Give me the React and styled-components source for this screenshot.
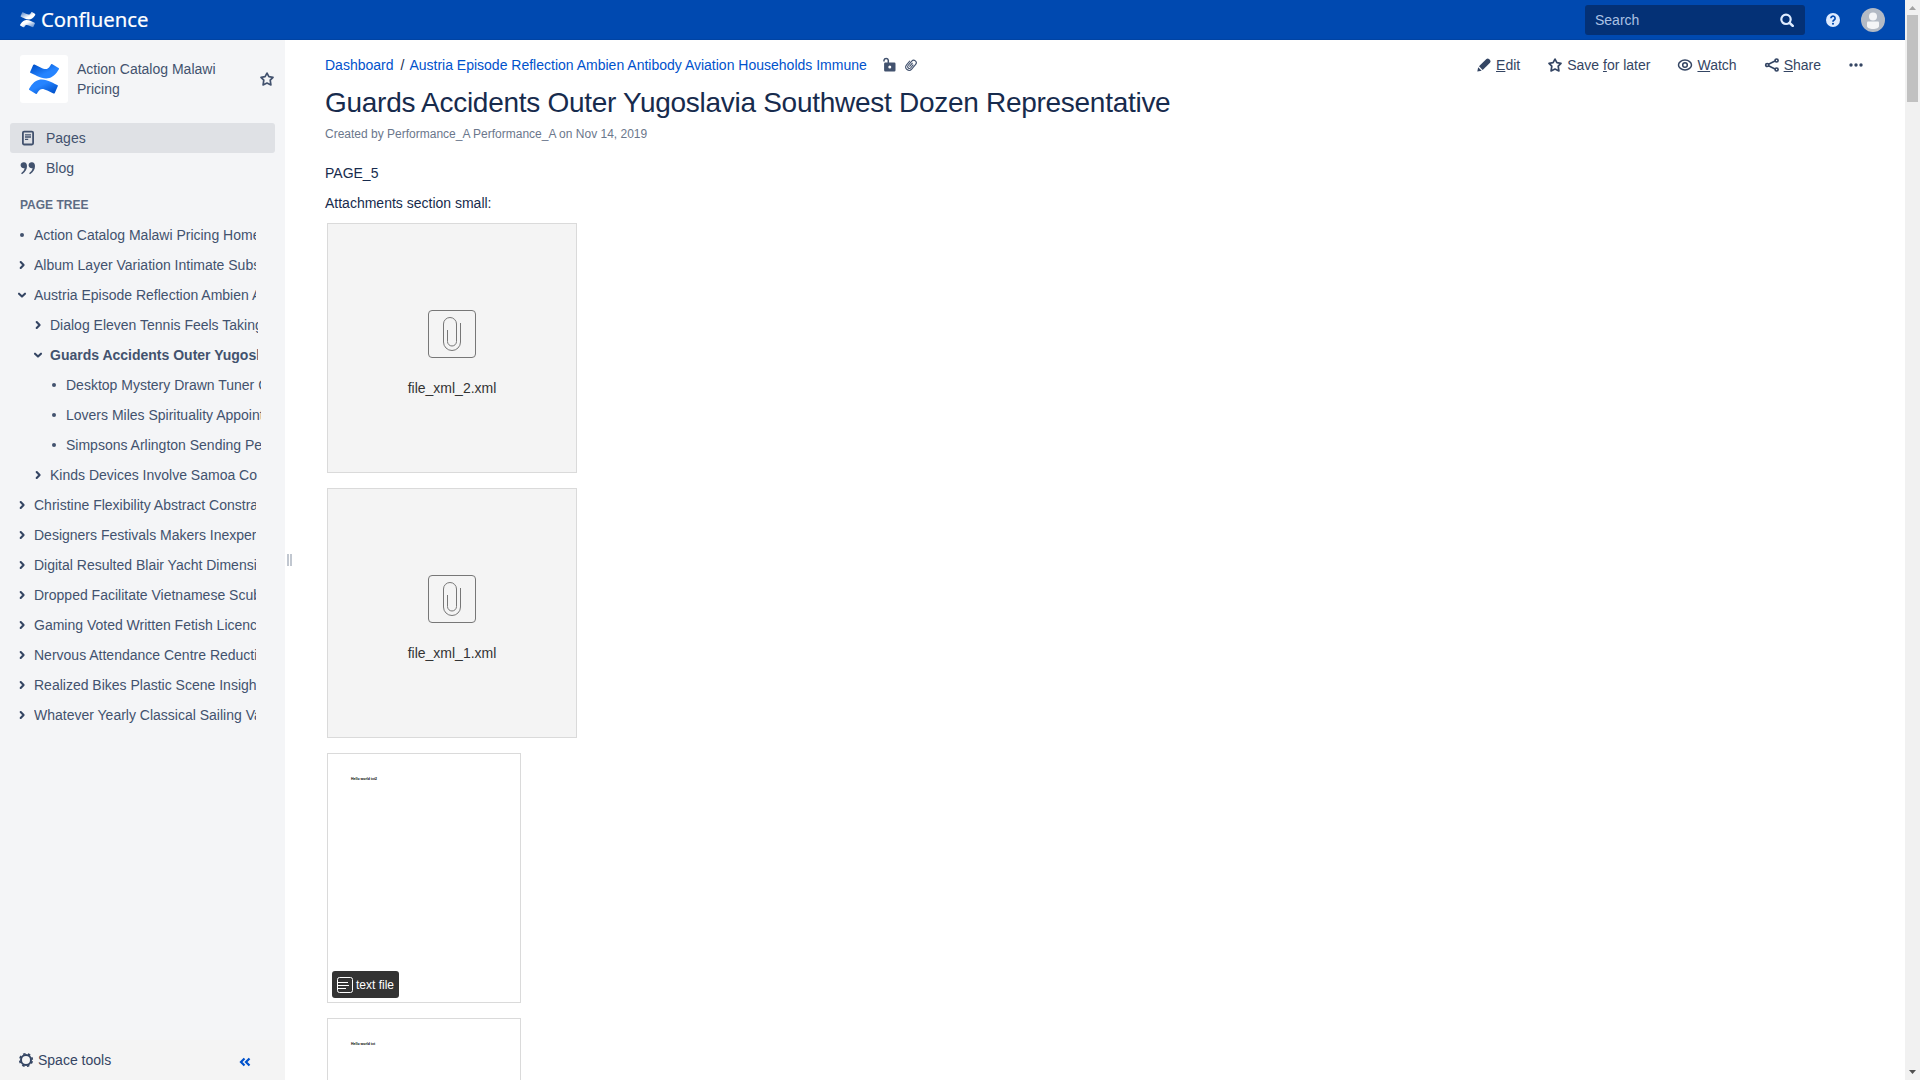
import React from "react";
import styled, { createGlobalStyle } from "styled-components";

const Global = createGlobalStyle`
  * { box-sizing: border-box; }
  html, body { margin: 0; padding: 0; height: 1080px; overflow: hidden; background: #fff; }
  body { font: 14px/20px "Liberation Sans", Arial, sans-serif; color: #172b4d; }
  p, h1 { margin: 0; font-weight: 400; }
  svg { display: block; flex: none; }
`;

const Window = styled.div`
  display: flex;
  width: 1920px;
  height: 1080px;
  overflow: hidden;
`;
const Page = styled.div`
  width: 1905px;
  display: flex;
  flex-direction: column;
`;
const Header = styled.header`
  height: 40px;
  flex: none;
  background: #0049b0;
  border-bottom: 1px solid #0043a3;
  display: flex;
  align-items: center;
  justify-content: space-between;
  padding: 0 20px;
`;
const HeaderTools = styled.div`
  display: flex;
  align-items: center;
`;
const SearchBox = styled.div`
  width: 220px;
  height: 30px;
  border-radius: 3px;
  background: #043176;
  color: #abc2e4;
  display: flex;
  align-items: center;
  justify-content: space-between;
  padding: 0 11px 0 10px;
  margin-right: 20px;
`;
const Avatar = styled.div`
  margin-left: 20px;
`;
const Body = styled.div`
  display: flex;
  flex: 1;
  min-height: 0;
`;
const Sidebar = styled.aside`
  width: 285px;
  background: #f4f5f7;
  color: #42526e;
  display: flex;
  flex-direction: column;
`;
const Space = styled.div`
  display: flex;
  align-items: center;
  height: 48px;
  margin: 15px 10px 0 20px;
`;
const SpaceLogo = styled.div`
  width: 48px;
  height: 48px;
  border-radius: 3px;
  background: #fff;
  display: flex;
  align-items: center;
  justify-content: center;
`;
const SpaceName = styled.div`
  width: 160px;
  margin: 0 auto 0 9px;
`;
const Nav = styled.nav`
  margin: 20px 10px 0;
`;
const NavItem = styled.div`
  height: 30px;
  display: flex;
  align-items: center;
  gap: 10px;
  padding-left: 10px;
  border-radius: 3px;
  background: ${(p) => (p.$active ? "#dfe1e5" : "transparent")};
`;
const TreeTitle = styled.div`
  font-size: 12px;
  font-weight: 700;
  color: #5e6c84;
  margin: 12px 0 5px 20px;
  height: 20px;
`;
const TreeRow = styled.div`
  height: 30px;
  display: flex;
  align-items: center;
  padding-left: ${(p) => 14 + p.$level * 16}px;
  font-weight: ${(p) => (p.$current ? 700 : 400)};
`;
const TreeText = styled.span`
  margin-left: 4px;
  width: ${(p) => [222, 208, 195][p.$level]}px;
  overflow: hidden;
  white-space: nowrap;
`;
const SideFooter = styled.div`
  margin-top: auto;
  height: 40px;
  background: #f4f4f4;
  display: flex;
  align-items: center;
  padding: 0 34px 0 18px;
  color: #344563;
`;
const FooterLabel = styled.span`
  margin: 0 auto 0 4px;
`;
const Splitter = styled.div`
  width: 10px;
  display: flex;
  gap: 1px;
  padding: 514px 0 0 2px;
`;
const Grip = styled.i`
  width: 2px;
  height: 12px;
  background: #c1c7d0;
`;
const Main = styled.main`
  flex: 1;
  min-width: 0;
  padding: 15px 41px 0 30px;
`;
const TopRow = styled.div`
  display: flex;
  height: 20px;
  align-items: center;
  justify-content: space-between;
`;
const Crumbs = styled.div`
  display: flex;
  align-items: center;
  white-space: nowrap;
`;
const Link = styled.a`
  color: #0052cc;
`;
const Slash = styled.span`
  margin: 0 5px 0 7px;
`;
const CrumbIcons = styled.span`
  display: flex;
  gap: 6px;
  margin-left: 14px;
`;
const Actions = styled.div`
  display: flex;
  align-items: center;
  color: #344563;
`;
const Action = styled.div`
  display: flex;
  align-items: center;
  gap: 4px;
  margin-left: 27px;
  white-space: nowrap;
`;
const Title = styled.h1`
  font-size: 28px;
  line-height: 32px;
  letter-spacing: -0.28px;
  margin-top: 12px;
`;
const Meta = styled.p`
  font-size: 12px;
  color: #6b778c;
  margin-top: 5px;
`;
const Content = styled.div`
  display: flex;
  flex-direction: column;
  gap: 10px;
  margin-top: 19px;
`;
const Files = styled.div`
  display: flex;
  flex-direction: column;
  align-items: flex-start;
  gap: 15px;
  padding-left: 2px;
`;
const FileCard = styled.div`
  width: 250px;
  height: 250px;
  flex: none;
  border: 1px solid #dadada;
  background: #f4f4f4;
  color: #333;
  display: flex;
  flex-direction: column;
  align-items: center;
  padding-top: 86px;
  gap: 20px;
`;
const DocCard = styled.div`
  width: 194px;
  height: 250px;
  flex: none;
  border: 1px solid #dadada;
  background: #fff;
  display: flex;
  flex-direction: column;
  justify-content: space-between;
  align-items: flex-start;
  padding: 22px 4px 4px;
`;
const DocText = styled.span`
  margin-left: 19px;
  height: 6px;
  font: 700 3.5px/6px "Liberation Sans", Arial, sans-serif;
  color: #000;
  white-space: nowrap;
`;
const Badge = styled.div`
  height: 27px;
  width: 67px;
  border-radius: 3px;
  background: #333;
  color: #fff;
  font-size: 12px;
  display: flex;
  align-items: center;
  gap: 3px;
  padding-left: 5px;
  white-space: nowrap;
`;
const Scrollbar = styled.div`
  width: 15px;
  background: #f1f1f1;
  display: flex;
  flex-direction: column;
  align-items: center;
`;
const Thumb = styled.div`
  width: 11px;
  height: 87px;
  margin-bottom: auto;
  background: #c1c1c1;
`;

function Mark({ size, light }) {
  const id = light ? "l" : "b";
  return (
    <svg width={size} height={size} viewBox="0 0 30 30">
      <defs>
        <linearGradient id={id + "1"} x1="1" y1="1" x2="0" y2="0">
          <stop offset="0.1" stopColor={light ? "#fff" : "#0052cc"} stopOpacity={light ? 0.4 : 1} />
          <stop offset="0.6" stopColor={light ? "#fff" : "#2684ff"} />
        </linearGradient>
        <linearGradient id={id + "2"} x1="0" y1="0" x2="1" y2="1">
          <stop offset="0.1" stopColor={light ? "#fff" : "#0052cc"} stopOpacity={light ? 0.4 : 1} />
          <stop offset="0.6" stopColor={light ? "#fff" : "#2684ff"} />
        </linearGradient>
      </defs>
      <path fill={`url(#${id}1)`} d="M1.1 23.2c-.3.5-.66 1.1-.97 1.55a.95.95 0 0 0 .32 1.3l6.2 3.8a1 1 0 0 0 1.36-.33c.25-.4.57-.95.92-1.52 2.46-4.06 4.93-3.56 9.4-1.43l6.14 2.9a1 1 0 0 0 1.33-.5l2.95-6.65a1 1 0 0 0-.5-1.3c-1.3-.6-3.88-1.82-6.2-2.95C13.7 14.03 6.7 14.3 1.1 23.2z" />
      <path fill={`url(#${id}2)`} d="M28.9 6.85c.3-.5.66-1.1.97-1.55a.95.95 0 0 0-.32-1.3L23.35.2a1 1 0 0 0-1.4.3c-.25.4-.57.95-.92 1.52-2.46 4.06-4.93 3.56-9.4 1.43L5.5.57a1 1 0 0 0-1.33.5L1.22 7.7a1 1 0 0 0 .5 1.3c1.3.6 3.88 1.82 6.2 2.95 8.38 4.06 15.38 3.8 20.98-5.1z" />
    </svg>
  );
}

const Star = () => (
  <svg width="16" height="16" viewBox="-1 -1 16 16">
    <path d="M7 1.1 8.9 4.7 13 5.3 10.2 8.2 10.9 12.9 7 11.1 3.1 12.9 3.8 8.2 1 5.3 5.1 4.7z" fill="none" stroke="currentColor" strokeWidth="1.7" strokeLinejoin="round" />
  </svg>
);

function Twist({ kind }) {
  return (
    <svg width="16" height="16" viewBox="0 0 16 16" fill="none" stroke="#344563" strokeWidth="2.1" strokeLinecap="round" strokeLinejoin="round">
      {kind === "dot" && <circle cx="8" cy="8" r="2" fill="#42526e" stroke="none" />}
      {kind === "closed" && <path d="M6.7 5 9.6 8 6.7 11" />}
      {kind === "open" && <path d="M5 6.7 8 9.6 11 6.7" />}
    </svg>
  );
}

const PagesIcon = () => (
  <svg width="16" height="16" viewBox="0 0 16 16">
    <rect x="2.9" y="1.6" width="10.2" height="12.9" rx="1.2" fill="none" stroke="#42526e" strokeWidth="1.8" />
    <path d="M5 4.8h6M5 7h6M5 9.3h3.2" stroke="#42526e" strokeWidth="1.3" />
  </svg>
);
const QuoteIcon = () => (
  <svg width="16" height="16" viewBox="0 0 16 16" fill="#42526e">
    <path d="M4 2.2a3 3 0 1 0 .6 5.8C4.3 10.2 3 11.8 1.1 13.2l.9 1C5.4 12.2 7 9.3 7 6 7 3.5 5.8 2.2 4 2.2z" />
    <path d="M12 2.2a3 3 0 1 0 .6 5.8c-.3 2.2-1.6 3.8-3.5 5.2l.9 1C13.4 12.2 15 9.3 15 6c0-2.5-1.2-3.8-3-3.8z" />
  </svg>
);
const ClipCard = () => (
  <svg width="48" height="48" viewBox="0 0 48 48" fill="none" stroke="#777">
    <rect x=".5" y=".5" width="47" height="47" rx="3.5" />
    <path d="M19.5 20v11.500a4.500 4.500 0 0 0 9 0V14a6.500 6.500 0 0 0-13 0v18a8.500 8.500 0 0 0 17 0V13" />
  </svg>
);

const tree = [
  [0, "dot", "Action Catalog Malawi Pricing Home"],
  [0, "closed", "Album Layer Variation Intimate Subs"],
  [0, "open", "Austria Episode Reflection Ambien Antibody"],
  [1, "closed", "Dialog Eleven Tennis Feels Taking"],
  [1, "open", "Guards Accidents Outer Yugoslavia"],
  [2, "dot", "Desktop Mystery Drawn Tuner C"],
  [2, "dot", "Lovers Miles Spirituality Appoint"],
  [2, "dot", "Simpsons Arlington Sending Pe"],
  [1, "closed", "Kinds Devices Involve Samoa Co"],
  [0, "closed", "Christine Flexibility Abstract Constra"],
  [0, "closed", "Designers Festivals Makers Inexper"],
  [0, "closed", "Digital Resulted Blair Yacht Dimensi"],
  [0, "closed", "Dropped Facilitate Vietnamese Scub"],
  [0, "closed", "Gaming Voted Written Fetish Licenc"],
  [0, "closed", "Nervous Attendance Centre Reducti"],
  [0, "closed", "Realized Bikes Plastic Scene Insigh"],
  [0, "closed", "Whatever Yearly Classical Sailing Va"],
];

export default function App() {
  return (
    <Window>
      <Global />
      <Page>
        <Header>
          <svg width="130" height="30" viewBox="0 0 130 30">
            <g transform="translate(0,7)"><Mark size={15.5} light /></g>
            <text x="21" y="21.6" fill="#fff" stroke="#fff" strokeWidth="0.2" fontFamily="Noto Sans, sans-serif" fontSize="20.5" textLength="107.5" lengthAdjust="spacingAndGlyphs">Confluence</text>
          </svg>
          <HeaderTools>
            <SearchBox>
              Search
              <svg width="14" height="14" viewBox="0 0 14 14" fill="none" stroke="#deebff">
                <circle cx="6" cy="6.3" r="4.7" strokeWidth="2.2" />
                <path d="m9.6 9.900 3.100 3" strokeWidth="2.600" strokeLinecap="round" />
              </svg>
            </SearchBox>
            <svg width="16" height="16" viewBox="0 0 16 16">
              <circle cx="8" cy="8" r="7" fill="#deebff" />
              <path d="M5.900 6.200a2.100 2.100 0 1 1 3.200 1.800C8.300 8.500 8 8.800 8 9.700" fill="none" stroke="#0049b0" strokeWidth="1.700" />
              <circle cx="8" cy="11.700" r="1.050" fill="#0049b0" />
            </svg>
            <Avatar>
              <svg width="24" height="24" viewBox="0 0 24 24">
                <circle cx="12" cy="12" r="12" fill="#b3bac5" />
                <circle cx="12" cy="8.500" r="4" fill="#f4f5f7" />
                <path d="M6 14.500a1 1 0 0 1 1-1h10a1 1 0 0 1 1 1V18c0 2-2.700 3-6 3s-6-1-6-3z" fill="#f4f5f7" />
              </svg>
            </Avatar>
          </HeaderTools>
        </Header>
        <Body>
          <Sidebar>
            <Space>
              <SpaceLogo><Mark size={30} /></SpaceLogo>
              <SpaceName>Action Catalog Malawi Pricing</SpaceName>
              <Star />
            </Space>
            <Nav>
              <NavItem $active><PagesIcon />Pages</NavItem>
              <NavItem><QuoteIcon />Blog</NavItem>
            </Nav>
            <TreeTitle>PAGE TREE</TreeTitle>
            {tree.map(([level, kind, text]) => (
              <TreeRow key={text} $level={level} $current={text.startsWith("Guards")}>
                <Twist kind={kind} />
                <TreeText $level={level}>{text}</TreeText>
              </TreeRow>
            ))}
            <SideFooter>
              <svg width="16" height="16" viewBox="0 0 16 16" fill="none" stroke="#344563">
                <circle cx="8" cy="8" r="5" strokeWidth="2" />
                <circle cx="8" cy="8" r="6.300" strokeWidth="1.600" strokeDasharray="2.500 2.448" strokeDashoffset="-1.200" />
              </svg>
              <FooterLabel>Space tools</FooterLabel>
              <svg width="12" height="16" viewBox="0 0 12 16" fill="none" stroke="#0052cc" strokeWidth="2.200">
                <path d="M5.500 6.500 2 10l3.500 3.500M10.500 6.500 7 10l3.500 3.500" />
              </svg>
            </SideFooter>
          </Sidebar>
          <Splitter><Grip /><Grip /></Splitter>
          <Main>
            <TopRow>
              <Crumbs>
                <Link>Dashboard</Link>
                <Slash>/</Slash>
                <Link>Austria Episode Reflection Ambien Antibody Aviation Households Immune</Link>
                <CrumbIcons>
                  <svg width="16" height="16" viewBox="0 0 16 16">
                    <path d="M3 4.500V3.200a2.200 2.200 0 0 1 4.300 0V6" fill="none" stroke="#42526e" strokeWidth="1.500" />
                    <path fillRule="evenodd" fill="#42526e" d="M4.300 5.500h9a1.200 1.200 0 0 1 1.200 1.200v6.600a1.200 1.200 0 0 1-1.200 1.200h-9a1.200 1.200 0 0 1-1.200-1.200V6.700a1.200 1.200 0 0 1 1.200-1.200zM8.800 8.500a1.500 1.500 0 1 0 0 3 1.500 1.500 0 0 0 0-3z" />
                  </svg>
                  <svg width="16" height="16" viewBox="0 0 16 16" fill="none" stroke="#42526e" strokeWidth="1.250">
                    <path transform="translate(.8 .9) scale(.88) rotate(40 8 8)" d="M10 6v4.500a2 2 0 0 1-4 0V4a2.800 2.800 0 0 1 5.800 0v7a3.800 3.800 0 0 1-7.600 0V5M8 5v5.500" />
                  </svg>
                </CrumbIcons>
              </Crumbs>
              <Actions>
                <Action>
                  <svg width="16" height="16" viewBox="0 0 16 16" fill="#344563">
                    <path d="m1.300 14.600.9-4.300 3.500 3.500z" />
                    <path d="m3 9.300 7.400-7.200a1.900 1.900 0 0 1 2.600 0l1 1a1.900 1.900 0 0 1 0 2.600l-7.300 7.400z" />
                  </svg>
                  <span><u>E</u>dit</span>
                </Action>
                <Action><Star /><span>Save <u>f</u>or later</span></Action>
                <Action>
                  <svg width="16" height="16" viewBox="0 0 16 16" fill="none" stroke="#344563" strokeWidth="1.500">
                    <ellipse cx="8" cy="8" rx="6.500" ry="4.900" />
                    <circle cx="8" cy="8" r="2.300" />
                  </svg>
                  <span><u>W</u>atch</span>
                </Action>
                <Action>
                  <svg width="16" height="16" viewBox="0 0 16 16" fill="none" stroke="#344563" strokeWidth="1.700">
                    <path d="m4.500 7.200 6.500-3.100M4.500 8.800l6.500 3.100" />
                    <circle cx="3.200" cy="8" r="1.500" /><circle cx="12.600" cy="3.500" r="1.500" /><circle cx="12.600" cy="12.500" r="1.500" />
                  </svg>
                  <span><u>S</u>hare</span>
                </Action>
                <Action>
                  <svg width="16" height="16" viewBox="0 0 16 16" fill="#344563">
                    <circle cx="3" cy="8" r="1.700" /><circle cx="8" cy="8" r="1.700" /><circle cx="13" cy="8" r="1.700" />
                  </svg>
                </Action>
              </Actions>
            </TopRow>
            <Title>Guards Accidents Outer Yugoslavia Southwest Dozen Representative</Title>
            <Meta>Created by Performance_A Performance_A on Nov 14, 2019</Meta>
            <Content>
              <p>PAGE_5</p>
              <p>Attachments section small:</p>
              <Files>
                <FileCard><ClipCard />file_xml_2.xml</FileCard>
                <FileCard><ClipCard />file_xml_1.xml</FileCard>
                <DocCard>
                  <DocText>Hello world txt2</DocText>
                  <Badge>
                    <svg width="16" height="16" viewBox="0 0 16 16" fill="none" stroke="#fff">
                      <rect x=".5" y=".5" width="15" height="15" rx="2" />
                      <path d="M1 5.500h10M1 8.500h11M1 11.500h8" />
                    </svg>
                    text file
                  </Badge>
                </DocCard>
                <DocCard><DocText>Hello world txt</DocText></DocCard>
              </Files>
            </Content>
          </Main>
        </Body>
      </Page>
      <Scrollbar>
        <svg width="15" height="15" viewBox="0 0 15 15"><path d="M4 10h7L7.500 6z" fill="#a3a3a3" /></svg>
        <Thumb />
        <svg width="15" height="15" viewBox="0 0 15 15"><path d="M4 5h7L7.500 9z" fill="#505050" /></svg>
      </Scrollbar>
    </Window>
  );
}
